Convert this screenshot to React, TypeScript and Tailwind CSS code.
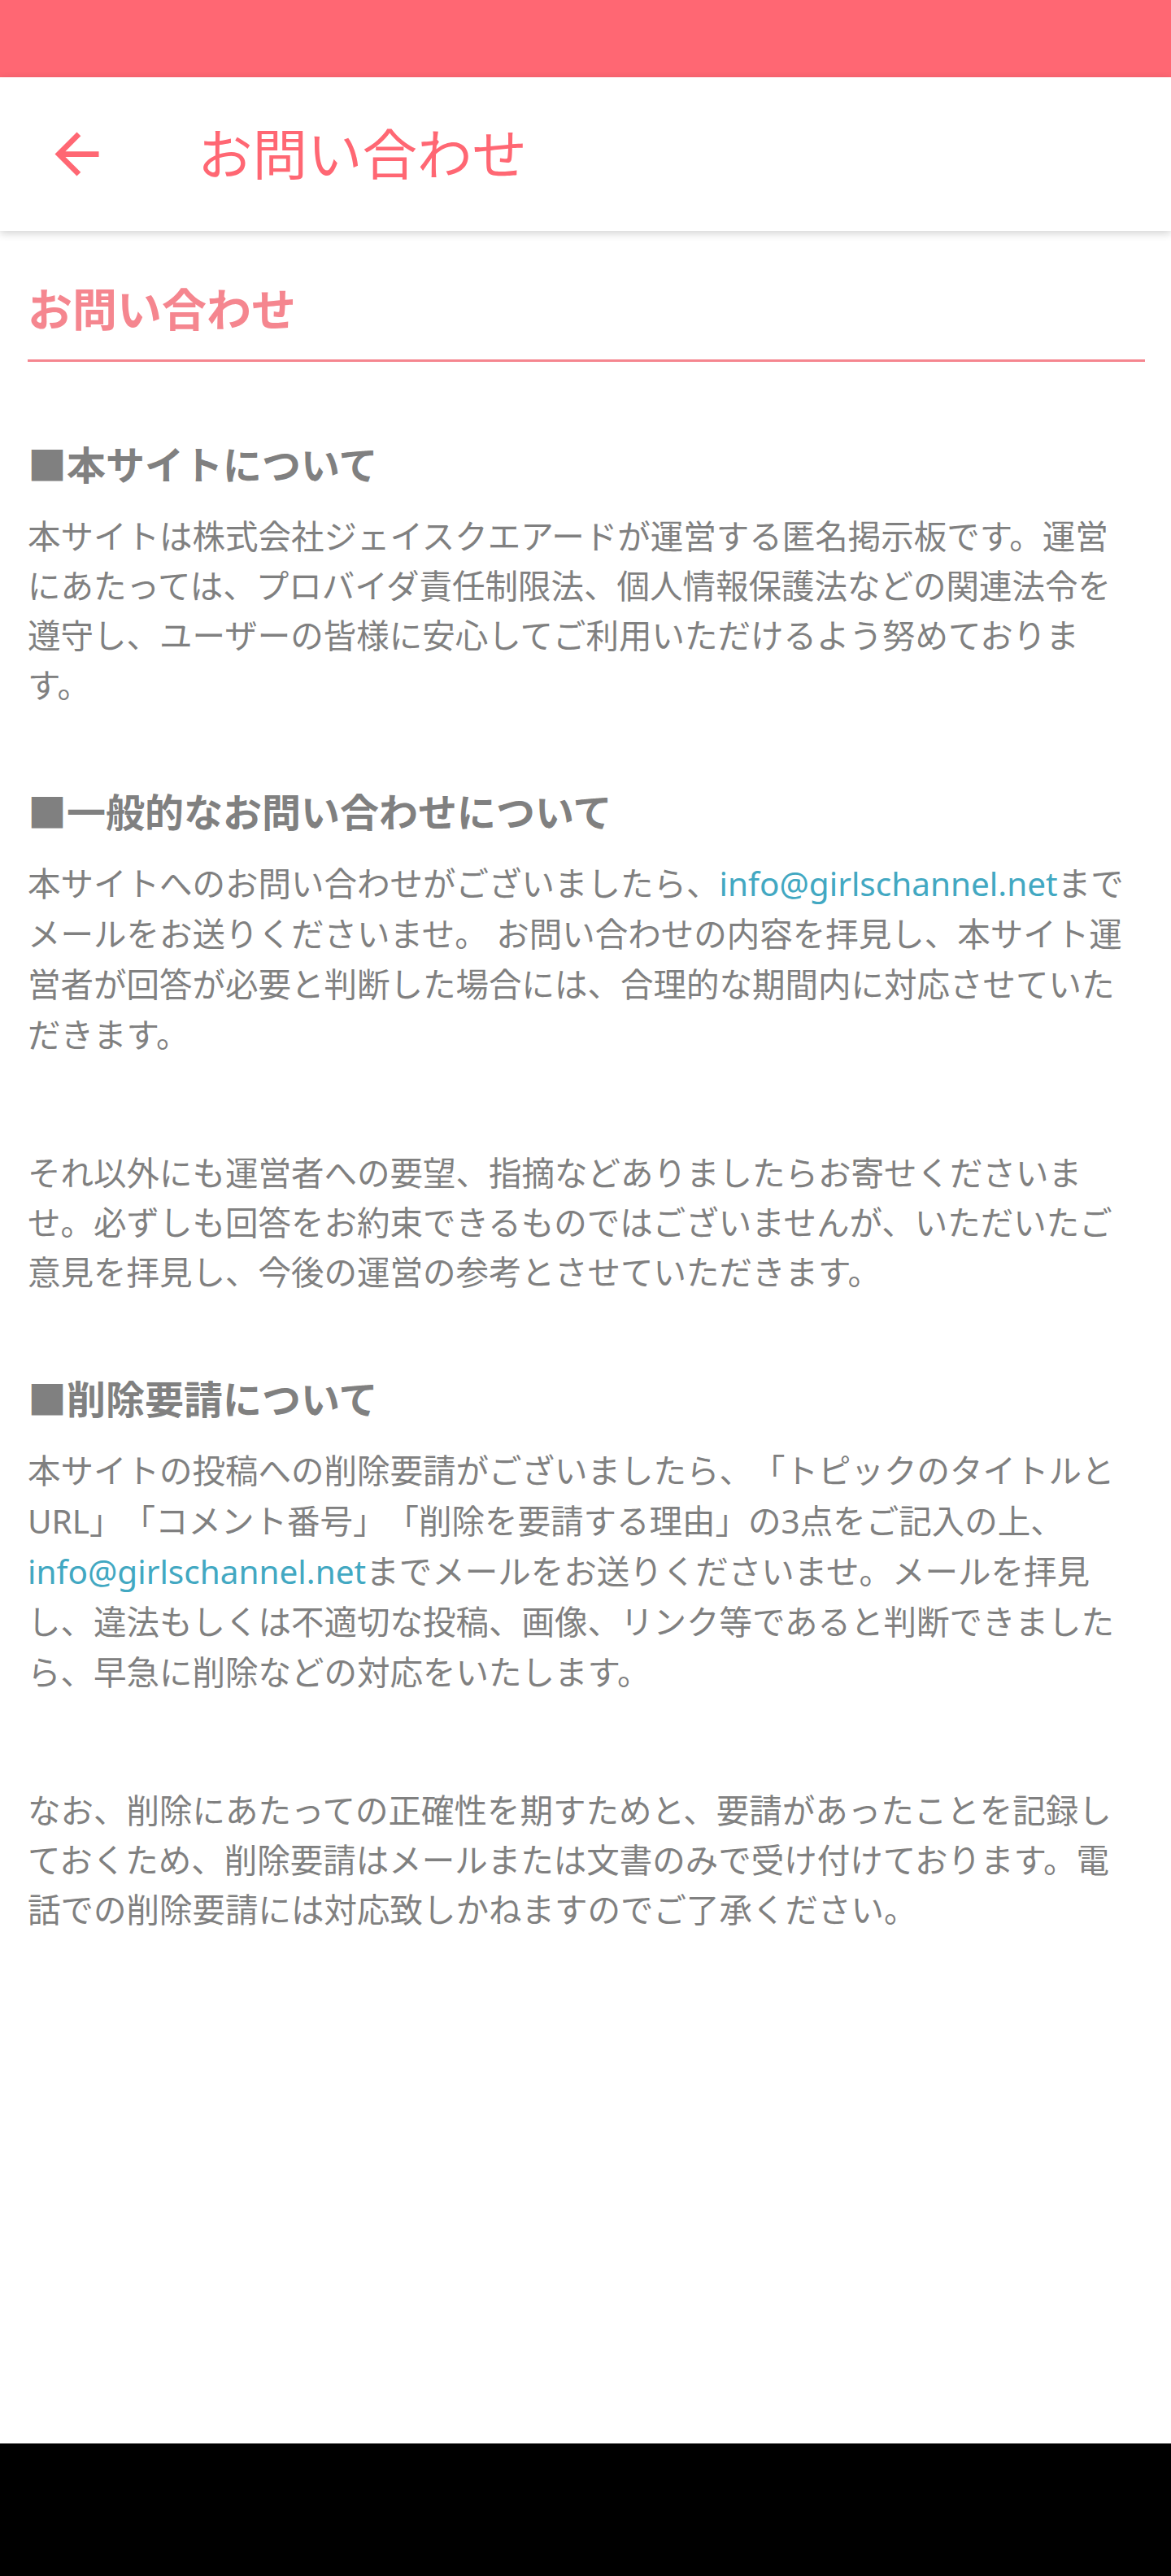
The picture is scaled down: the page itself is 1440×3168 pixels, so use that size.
import React from 'react';

const FONT = '"Noto Sans", "Noto Sans CJK JP", sans-serif';

function Mail() {
  return <span className="text-[#42a8c2]">info@girlschannel.net</span>;
}

function Heading({ children, first }: { children: React.ReactNode; first?: boolean }) {
  return (
    <h3
      className={`${first ? 'mt-[91px]' : 'mt-[90px]'} mb-[22px] text-[48px] font-bold leading-[71px] text-[#808080]`}
    >
      ■{children}
    </h3>
  );
}

function Para({ children, gap, tall }: { children: React.ReactNode; gap?: boolean; tall?: boolean }) {
  return (
    <p
      className={`${gap ? 'mt-[108px]' : ''} ${tall ? 'leading-[62px]' : 'leading-[61px]'} text-[40.5px] text-[#808080] [text-spacing-trim:space-all]`}
    >
      {children}
    </p>
  );
}

export default function App() {
  return (
    <div className="flex h-[3168px] flex-col bg-white" style={{ fontFamily: FONT }}>
      <div className="h-[95px] shrink-0 bg-[#ff6773]" />

      <header className="relative z-10 flex h-[189px] shrink-0 items-center bg-white shadow-[0_3px_10px_rgba(0,0,0,0.18)]">
        <button className="ml-[54px] flex h-[81px] w-[81px] items-center justify-center">
          <svg viewBox="0 0 24 24" className="h-[81px] w-[81px]" fill="#ff6773">
            <path d="M20 11H7.83l5.59-5.59L12 4l-8 8 8 8 1.41-1.41L7.83 13H20v-2z" />
          </svg>
        </button>
        <h1 className="ml-[108px] text-[67.5px] leading-none text-[#ff6773]">お問い合わせ</h1>
      </header>

      <main className="flex-1 pl-[34px] pr-[32px] pt-[55px]">
        <h2 className="border-b-[3px] border-[#f5868f] pb-[22px] text-[55px] font-bold leading-[81px] text-[#f5868f]">
          お問い合わせ
        </h2>

        <div className="pr-[14px]">
          <Heading first>本サイトについて</Heading>
          <Para>
            本サイトは株式会社ジェイスクエアードが運営する匿名掲示板です。運営にあたっては、プロバイダ責任制限法、個人情報保護法などの関連法令を遵守し、ユーザーの皆様に安心してご利用いただけるよう努めております。
          </Para>

          <Heading>一般的なお問い合わせについて</Heading>
          <Para tall>
            本サイトへのお問い合わせがございましたら、<Mail />
            までメールをお送りくださいませ。 お問い合わせの内容を拝見し、本サイト運営者が回答が必要と判断した場合には、合理的な期間内に対応させていただきます。
          </Para>
          <Para gap>
            それ以外にも運営者への要望、指摘などありましたらお寄せくださいませ。必ずしも回答をお約束できるものではございませんが、いただいたご意見を拝見し、今後の運営の参考とさせていただきます。
          </Para>

          <Heading>削除要請について</Heading>
          <Para tall>
            本サイトの投稿への削除要請がございましたら、「トピックのタイトルとURL」「コメント番号」「削除を要請する理由」の3点をご記入の上、
            <Mail />
            までメールをお送りくださいませ。メールを拝見し、違法もしくは不適切な投稿、画像、リンク等であると判断できましたら、早急に削除などの対応をいたします。
          </Para>
          <Para gap>
            なお、削除にあたっての正確性を期すためと、要請があったことを記録しておくため、削除要請はメールまたは文書のみで受け付けております。電話での削除要請には対応致しかねますのでご了承ください。
          </Para>
        </div>
      </main>

      <div className="h-[163px] shrink-0 bg-black" />
    </div>
  );
}
